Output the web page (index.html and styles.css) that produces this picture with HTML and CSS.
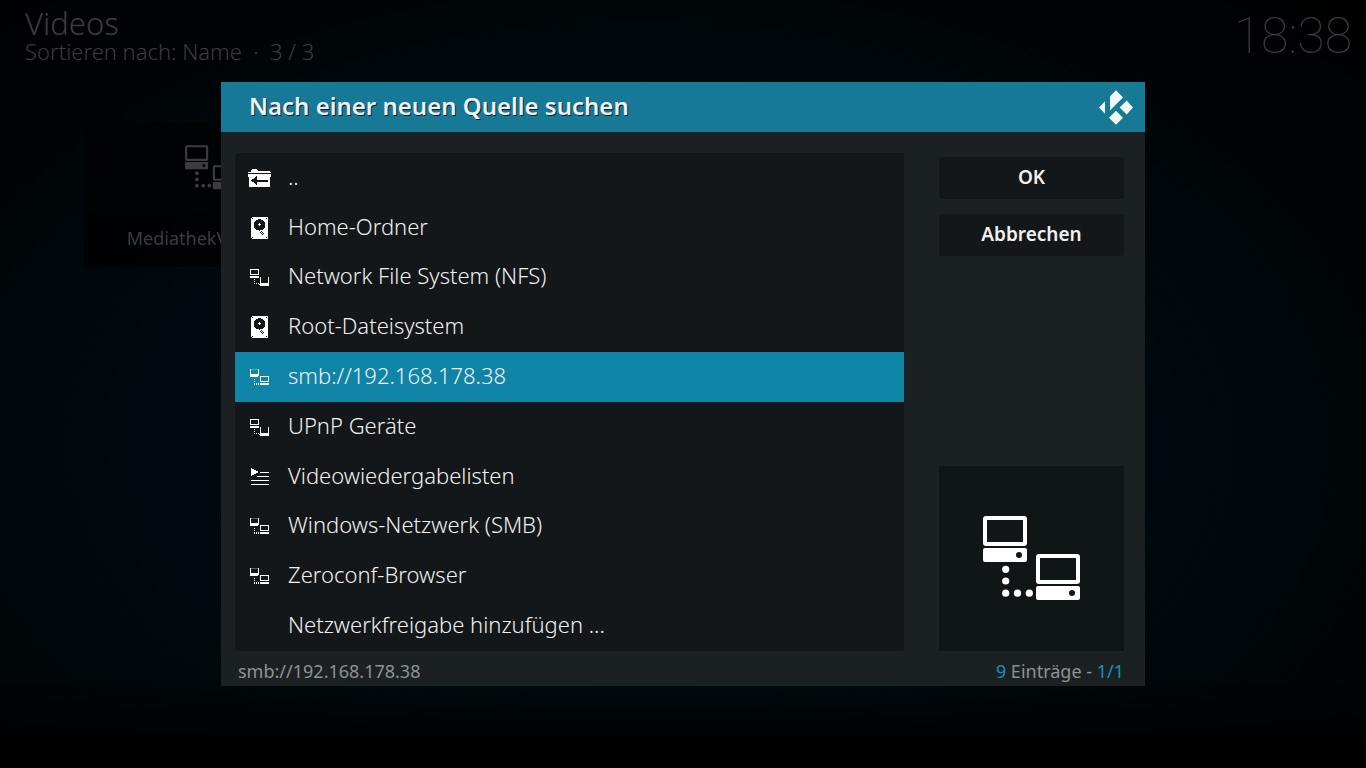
FILE: index.html
```
<!DOCTYPE html>
<html lang="de">
<head>
    <meta charset="UTF-8">
    <meta name="viewport" content="width=device-width, initial-scale=1.0">
    <title>Videos</title>
    <link rel="stylesheet" href="styles.css">
</head>
<body>

    <!-- Shared icons -->
    <svg class="sprites" aria-hidden="true">
        <symbol id="icon-network" viewBox="0 0 185 185">
            <g fill="none" stroke="currentColor" stroke-width="4">
                <rect x="46" y="52" width="40" height="26" rx="1"/>
                <rect x="99" y="90" width="40" height="26" rx="1"/>
            </g>
            <path fill="currentColor" fill-rule="evenodd" d="M46 82h40a2 2 0 0 1 2 2v10a2 2 0 0 1-2 2h-40a2 2 0 0 1-2-2v-10a2 2 0 0 1 2-2zM80 86a3 3 0 1 0 0 6a3 3 0 0 0 0-6zM99 120h40a2 2 0 0 1 2 2v10a2 2 0 0 1-2 2h-40a2 2 0 0 1-2-2v-10a2 2 0 0 1 2-2zM133 124a3 3 0 1 0 0 6a3 3 0 0 0 0-6z"/>
            <g fill="currentColor">
                <circle cx="66.7" cy="103.3" r="3.6"/>
                <circle cx="66.7" cy="115" r="3.6"/>
                <circle cx="66.7" cy="127.2" r="3.6"/>
                <circle cx="78.5" cy="127.2" r="3.6"/>
                <circle cx="90.3" cy="127.2" r="3.6"/>
            </g>
        </symbol>
        <symbol id="icon-folder-up" viewBox="0 0 24 24">
            <path fill="currentColor" fill-rule="evenodd" d="M4 3h5l1 2h12v1h1v1H0V6h3V4zM0 8h23v3h-1v10H1V11H0zM3 14.5L9 10V13.5H20V16H9V19z"/>
        </symbol>
        <symbol id="icon-disk" viewBox="0 0 24 24">
            <path fill="currentColor" d="M4 1h15l1 1v20l-1 1H4l-1-1V2z"/>
            <circle cx="11.5" cy="9" r="5.7" fill="#141719"/>
            <path fill="currentColor" d="M11 7h1v1h1v1h-1v1h-1v-1h-1v-1h1z"/>
            <path fill="#141719" d="M4 2h1v1H4zM18 2h1v1h-1zM4 21h1v1H4zM18 21h1v1h-1zM11 14h1v1h-1zM13 15h1v1h-1zM12 16h1v1h-1zM14 16h1v1h-1zM13 17h1v1h-1zM15 17h1v1h-1zM14 18h1v1h-1z"/>
        </symbol>
        <symbol id="icon-net-a" viewBox="0 0 24 24">
            <path fill="currentColor" fill-rule="evenodd" d="M2 4h9v6H2zM3 5v4h7V5zM2 11h9v2H2zM6 14h1v1H6zM6 16h1v1H6zM6 18h1v1H6zM8 18h1v1H8zM10 18h1v1h-1zM12 12h1v6h7v-6h1v9h-9v-1h-1v-1h1z"/>
        </symbol>
        <symbol id="icon-net-b" viewBox="0 0 24 24">
            <path fill="currentColor" fill-rule="evenodd" d="M2 4h1v5h7V4h1v6H2zM2 10h9v1h-1v1H2zM6 14h1v1H6zM6 16h1v1H6zM6 18h1v2H6zM8 18h1v2H8zM10 18h1v2h-1zM12 11h9v6h-9zM13 12v4h7v-4zM12 18h9v2h-9z"/>
            <path fill="currentColor" opacity="0.3" d="M3 4h7v1H3z"/>
        </symbol>
        <symbol id="icon-playlist" viewBox="0 0 24 24">
            <path fill="currentColor" d="M3 3l8 4-8 4zM12 7h9v1h-9zM9 11h12v1H9zM3 15h18v1H3zM3 19h18v1H3z"/>
        </symbol>
    </svg>

    <!-- Library in the background -->
    <header class="topbar">
        <div>
            <h1>Videos</h1>
            <p>Sortieren nach: Name &nbsp;·&nbsp; 3 / 3</p>
        </div>
        <time class="clock">18:38</time>
    </header>
    <main class="library">
        <a class="tile" href="#">
            <span class="tile-image"><svg><use href="#icon-network"/></svg></span>
            <span class="tile-label">MediathekView.de</span>
        </a>
    </main>

    <!-- Browse dialog -->
    <div class="overlay">
        <section class="dialog" role="dialog" aria-labelledby="dialogTitle">
            <div class="dialog-header">
                <h2 id="dialogTitle">Nach einer neuen Quelle suchen</h2>
                <svg class="logo" viewBox="117 269 102 104">
                    <path fill="#f2f8fa" d="M168 269l21 22-39 39v-43zM117 321l18-19v38zM200 300l19 21-19 21-21-21zM168 331l21 21-21 21-21-21z"/>
                </svg>
            </div>
            <div class="dialog-body">
                <ul class="sources">
                    <li><button class="source"><svg><use href="#icon-folder-up"/></svg>..</button></li>
                    <li><button class="source"><svg><use href="#icon-disk"/></svg>Home-Ordner</button></li>
                    <li><button class="source"><svg><use href="#icon-net-a"/></svg>Network File System (NFS)</button></li>
                    <li><button class="source"><svg><use href="#icon-disk"/></svg>Root-Dateisystem</button></li>
                    <li><button class="source selected"><svg><use href="#icon-net-b"/></svg>smb://192.168.178.38</button></li>
                    <li><button class="source"><svg><use href="#icon-net-a"/></svg>UPnP Geräte</button></li>
                    <li><button class="source"><svg><use href="#icon-playlist"/></svg>Videowiedergabelisten</button></li>
                    <li><button class="source"><svg><use href="#icon-net-b"/></svg>Windows-Netzwerk (SMB)</button></li>
                    <li><button class="source"><svg><use href="#icon-net-b"/></svg>Zeroconf-Browser</button></li>
                    <li><button class="source"><svg></svg>Netzwerkfreigabe hinzufügen ...</button></li>
                </ul>
                <div class="side">
                    <button class="btn">OK</button>
                    <button class="btn">Abbrechen</button>
                    <svg class="preview"><use href="#icon-network"/></svg>
                </div>
            </div>
            <div class="dialog-footer">
                <span>smb://192.168.178.38</span>
                <span><b>9</b> Einträge - <b>1/1</b></span>
            </div>
        </section>
    </div>

</body>
</html>
```
FILE: styles.css
```
* {
    box-sizing: border-box;
}

body {
    margin: 0;
    min-height: 100vh;
    background:
        linear-gradient(transparent 88%, #000 98%),
        radial-gradient(ellipse at 47% 58%, #001219 0%, #000a0e 45%, #000508 70%, #000 100%);
    color: #3c3c3c;
    font-family: "Noto Sans", "Open Sans", sans-serif;
}

h1, h2, p, ul {
    margin: 0;
    padding: 0;
    font-weight: 400;
}

button {
    border: none;
    color: inherit;
    font-family: inherit;
    cursor: pointer;
}

.sprites {
    position: absolute;
    width: 0;
    height: 0;
}

.topbar {
    display: flex;
    justify-content: space-between;
    padding: 7px 14px 0 25px;
}

.topbar h1 {
    font-size: 31px;
    font-weight: 300;
    line-height: 32px;
}

.topbar p {
    font-size: 22px;
    font-weight: 300;
    line-height: 24px;
}

.clock {
    font-family: Roboto, sans-serif;
    font-size: 50px;
    font-weight: 100;
    line-height: 58px;
}

.library {
    padding: 57px 84px;
}

.tile {
    display: block;
    width: 252px;
    background: rgba(0, 0, 0, 0.5);
    color: #3c3c3c;
    text-align: center;
    text-decoration: none;
}

.tile-image {
    display: flex;
    align-items: center;
    justify-content: center;
    height: 91px;
}

.tile-image svg {
    flex: none;
    width: 97px;
    height: 97px;
}

.tile-label {
    display: block;
    padding: 0 12px 4px 0;
    background: rgba(0, 0, 0, 0.4);
    font-size: 18px;
    line-height: 50px;
}

.overlay {
    position: fixed;
    inset: 0;
    display: flex;
    align-items: center;
    justify-content: center;
}

.dialog {
    width: 90%;
    max-width: 924px;
    background: #1b2123;
    color: #f0f0f0;
}

.dialog-header {
    display: flex;
    align-items: center;
    justify-content: space-between;
    height: 50px;
    padding: 0 12px 0 28px;
    background: #167996;
}

.dialog-header h2 {
    padding-bottom: 3px;
    font-size: 24px;
    font-weight: 600;
    text-shadow: 1px 1px 0 #07222b;
}

.logo {
    width: 34px;
    height: 35px;
}

.dialog-body {
    display: flex;
    gap: 35px;
    padding: 21px 21px 0 14px;
}

.sources {
    display: grid;
    grid-auto-rows: 1fr;
    flex: 1;
    min-height: 498px;
    background: #141719;
    border-radius: 3px;
    list-style: none;
}

.source {
    display: flex;
    align-items: center;
    gap: 16px;
    width: 100%;
    height: 100%;
    padding: 0 13px 4px;
    background: none;
    font-size: 22px;
    font-weight: 300;
    text-align: left;
}

.source svg {
    flex: none;
    width: 24px;
    height: 24px;
    margin-top: 4px;
    color: #fff;
    shape-rendering: crispEdges;
}

.source.selected {
    background: #0f84a6;
}

.side {
    display: flex;
    flex-direction: column;
    gap: 15px;
    width: 185px;
    padding-top: 4px;
}

.btn {
    height: 42px;
    padding-bottom: 3px;
    background: #141719;
    border-radius: 3px;
    font-size: 19px;
    font-weight: 600;
}

.preview {
    width: 185px;
    height: 185px;
    margin-top: auto;
    background: #101616;
    color: #fff;
}

.dialog-footer {
    display: flex;
    justify-content: space-between;
    padding: 8px 21px 3px 17px;
    color: #8f9292;
    font-size: 18px;
    line-height: 24px;
}

.dialog-footer b {
    color: #1593b9;
    font-weight: 400;
}
```
